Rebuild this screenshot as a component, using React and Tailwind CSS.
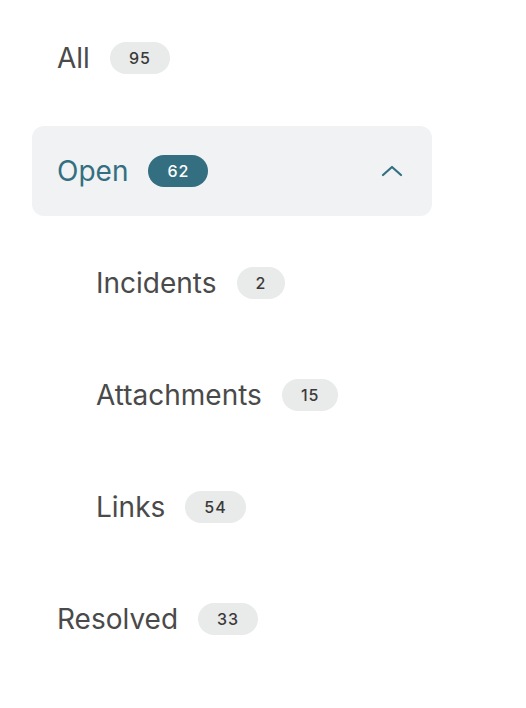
import React from "react";

function Badge({ count, active }) {
  return (
    <span
      className={
        active
          ? "inline-flex h-8 items-center rounded-full bg-[#336f80] px-[19px] text-[16px] font-medium tracking-[1px] text-white"
          : "inline-flex h-8 items-center rounded-full bg-[#e9eaea] px-[19px] text-[16px] font-medium tracking-[1px] text-[#3a3a3a]"
      }
    >
      {count}
    </span>
  );
}

function ChevronUp() {
  return (
    <svg width="22" height="14" viewBox="0 0 22 14" fill="none" className="text-[#336f80]">
      <path d="M2 11 L11 3 L20 11" stroke="currentColor" strokeWidth="2.2" strokeLinecap="round" strokeLinejoin="round" />
    </svg>
  );
}

export default function App() {
  const subItems = [
    { label: "Incidents", count: 2 },
    { label: "Attachments", count: 15 },
    { label: "Links", count: 54 },
  ];

  return (
    <div
      className="min-h-screen w-full bg-white px-8 pt-[14px]"
      style={{ fontFamily: "Inter, 'Noto Sans', sans-serif" }}
    >
      <div className="flex w-[400px] flex-col gap-[22px]">
        <div className="flex h-[88px] items-center gap-5 pl-[25px]">
          <span className="text-[28px] text-[#4a4a4a]">All</span>
          <Badge count={95} />
        </div>

        {/* expanded group */}
        <div className="mt-[2px] flex h-[90px] items-center justify-between rounded-xl bg-[#f0f2f4] pl-[25px] pr-[29px]">
          <div className="flex items-center gap-5">
            <span className="text-[28px] text-[#336f80]">Open</span>
            <Badge count={62} active />
          </div>
          <ChevronUp />
        </div>

        {subItems.map((item) => (
          <div key={item.label} className="flex h-[90px] items-center gap-5 pl-[64px]">
            <span className="text-[28px] text-[#4a4a4a]">{item.label}</span>
            <Badge count={item.count} />
          </div>
        ))}

        <div className="flex h-[90px] items-center gap-5 pl-[25px]">
          <span className="text-[28px] text-[#4a4a4a]">Resolved</span>
          <Badge count={33} />
        </div>
      </div>
    </div>
  );
}
